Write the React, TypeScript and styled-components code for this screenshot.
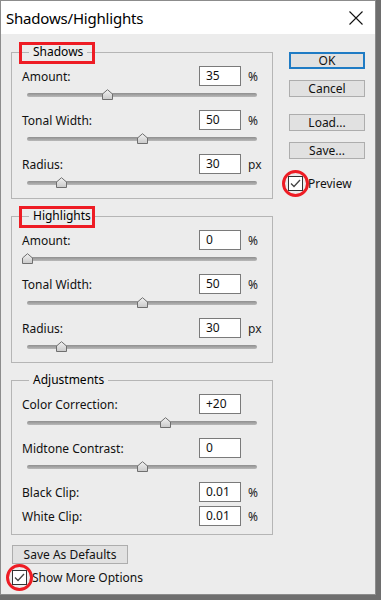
import React from "react";
import styled, { createGlobalStyle } from "styled-components";

const Global = createGlobalStyle`
  html, body { margin: 0; padding: 0; background: #6e6e6e; }
  body { font-family: "Noto Sans", "Open Sans", sans-serif; color: #000; }
  * { box-sizing: border-box; }
`;

const Window = styled.div`
  width: 376px;
  height: 595px;
  border: 1px solid #8c8c8c;
  background: #ececec;
  display: flex;
  flex-direction: column;
`;

const TitleBar = styled.div`
  height: 33px;
  background: #ffffff;
  display: flex;
  align-items: center;
  justify-content: space-between;
  padding: 0 12px 0 5px;
`;

const Title = styled.div`
  font-size: 15px;
  letter-spacing: -0.2px;
  color: #000;
`;

const Body = styled.div`
  display: flex;
  padding: 10px 0 0 10px;
  gap: 16px;
`;

const LeftColumn = styled.div`
  width: 262px;
  display: flex;
  flex-direction: column;
  gap: 9px;
`;

const RightColumn = styled.div`
  width: 76px;
  padding-top: 8px;
  display: flex;
  flex-direction: column;
`;

const Group = styled.fieldset`
  margin: 0;
  padding: 0;
  border: 1px solid #b5b5b5;
  min-width: 0;
`;

const Legend = styled.legend`
  position: relative;
  margin-left: 17px;
  padding: 0 4px;
  font-size: 12px;
  line-height: 16px;
  height: 16px;
`;

const RedBox = styled.span`
  position: absolute;
  left: -10px;
  top: -2px;
  width: 76px;
  height: 22px;
  border: 3px solid #ee1c24;
`;

const GroupContent = styled.div<{ $bottom?: number }>`
  padding: 6px 0 ${(p) => p.$bottom ?? 0}px 10px;
  display: flex;
  flex-direction: column;
`;

const Row = styled.div<{ $gap?: number }>`
  display: flex;
  align-items: center;
  height: 20px;
  margin-top: ${(p) => p.$gap ?? 0}px;
`;

const Label = styled.div`
  flex: 1;
  font-size: 12px;
  color: #111;
`;

const NumberBox = styled.div`
  width: 42px;
  height: 20px;
  background: #fff;
  border: 1px solid #7a7a7a;
  font-size: 12px;
  line-height: 18px;
  padding-left: 6px;
  color: #111;
`;

const Unit = styled.div`
  width: 31px;
  padding-left: 7px;
  font-size: 12px;
  color: #222;
`;

const SliderBlock = styled.div`
  position: relative;
  height: 24px;
  width: 230px;
  margin-left: 5px;
`;

const Track = styled.div`
  position: absolute;
  left: 0;
  right: 0;
  top: 7px;
  height: 4px;
  border-radius: 2px;
  background: linear-gradient(#8f8f8f, #b9b9b9);
`;

const ThumbSvg = styled.svg`
  position: absolute;
  top: 3px;
`;

const Button = styled.div<{ $default?: boolean; $mt?: number }>`
  height: 17px;
  margin-top: ${(p) => p.$mt ?? 0}px;
  background: #e1e1e1;
  border: ${(p) => (p.$default ? "2px solid #1f7bc4" : "1px solid #adadad")};
  font-size: 12px;
  line-height: ${(p) => (p.$default ? "13px" : "15px")};
  text-align: center;
  color: #111;
`;

const CheckRow = styled.div<{ $mt?: number; $ml?: number }>`
  display: flex;
  align-items: center;
  margin-top: ${(p) => p.$mt ?? 0}px;
  margin-left: ${(p) => p.$ml ?? 0}px;
  font-size: 12px;
  color: #111;
  gap: 5px;
`;

const CheckBox = styled.div`
  position: relative;
  width: 15px;
  height: 15px;
  border: 1px solid #333;
  background: #fff;
  display: flex;
  align-items: center;
  justify-content: center;
`;

const RedRing = styled.span`
  position: absolute;
  left: 50%;
  top: 50%;
  width: 27px;
  height: 27px;
  margin: -13.5px 0 0 -13.5px;
  border: 3px solid #ee1c24;
  border-radius: 50%;
`;

const DefaultsButton = styled(Button)`
  width: 116px;
  height: 19px;
  line-height: 17px;
  margin-left: 1px;
`;

const Thumb = ({ pos }: { pos: number }) => (
  <ThumbSvg width="11" height="11" viewBox="0 0 11 11" style={{ left: `${pos * 230 - 5.5}px` }}>
    <defs>
      <linearGradient id="tg" x1="0" y1="0" x2="0" y2="1">
        <stop offset="0" stopColor="#f2f2f2" />
        <stop offset="1" stopColor="#c9c9c9" />
      </linearGradient>
    </defs>
    <path d="M0.5 5 L5.5 0.7 L10.5 5 L10.5 10.5 L0.5 10.5 Z" fill="url(#tg)" stroke="#6f6f6f" strokeWidth="1" />
  </ThumbSvg>
);

const Slider = ({ pos }: { pos: number }) => (
  <SliderBlock>
    <Track />
    <Thumb pos={pos} />
  </SliderBlock>
);

const Check = ({ ring }: { ring?: boolean }) => (
  <CheckBox>
    <svg width="11" height="9" viewBox="0 0 11 9">
      <path d="M1 4.5 L4 7.5 L10 1" fill="none" stroke="#444" strokeWidth="1.3" />
    </svg>
    {ring && <RedRing />}
  </CheckBox>
);

type Field = { label: string; value: string; unit?: string; pos: number };

const shadows: Field[] = [
  { label: "Amount:", value: "35", unit: "%", pos: 0.35 },
  { label: "Tonal Width:", value: "50", unit: "%", pos: 0.5 },
  { label: "Radius:", value: "30", unit: "px", pos: 0.148 },
];

const highlights: Field[] = [
  { label: "Amount:", value: "0", unit: "%", pos: 0 },
  { label: "Tonal Width:", value: "50", unit: "%", pos: 0.5 },
  { label: "Radius:", value: "30", unit: "px", pos: 0.148 },
];

const SliderFields = ({ fields }: { fields: Field[] }) => (
  <>
    {fields.map((f) => (
      <React.Fragment key={f.label}>
        <Row>
          <Label>{f.label}</Label>
          <NumberBox>{f.value}</NumberBox>
          <Unit>{f.unit ?? ""}</Unit>
        </Row>
        <Slider pos={f.pos} />
      </React.Fragment>
    ))}
  </>
);

export default function App() {
  return (
    <>
      <Global />
      <Window>
        <TitleBar>
          <Title>Shadows/Highlights</Title>
          <svg width="14" height="14" viewBox="0 0 14 14">
            <path d="M0.5 0.5 L13.5 13.5 M13.5 0.5 L0.5 13.5" stroke="#111" strokeWidth="1.1" />
          </svg>
        </TitleBar>
        <Body>
          <LeftColumn>
            <Group>
              <Legend>
                Shadows
                <RedBox />
              </Legend>
              <GroupContent>
                <SliderFields fields={shadows} />
              </GroupContent>
            </Group>
            <Group>
              <Legend>
                Highlights
                <RedBox />
              </Legend>
              <GroupContent>
                <SliderFields fields={highlights} />
              </GroupContent>
            </Group>
            <Group>
              <Legend>Adjustments</Legend>
              <GroupContent $bottom={8}>
                <Row>
                  <Label>Color Correction:</Label>
                  <NumberBox>+20</NumberBox>
                  <Unit />
                </Row>
                <Slider pos={0.6} />
                <Row>
                  <Label>Midtone Contrast:</Label>
                  <NumberBox>0</NumberBox>
                  <Unit />
                </Row>
                <Slider pos={0.5} />
                <Row>
                  <Label>Black Clip:</Label>
                  <NumberBox>0.01</NumberBox>
                  <Unit>%</Unit>
                </Row>
                <Row $gap={4}>
                  <Label>White Clip:</Label>
                  <NumberBox>0.01</NumberBox>
                  <Unit>%</Unit>
                </Row>
              </GroupContent>
            </Group>
            <DefaultsButton $mt={1}>Save As Defaults</DefaultsButton>
            <CheckRow $mt={-4} $ml={1}>
              <Check ring />
              <span>Show More Options</span>
            </CheckRow>
          </LeftColumn>
          <RightColumn>
            <Button $default>OK</Button>
            <Button $mt={11}>Cancel</Button>
            <Button $mt={17}>Load...</Button>
            <Button $mt={11}>Save...</Button>
            <CheckRow $mt={16} $ml={-1}>
              <Check ring />
              <span>Preview</span>
            </CheckRow>
          </RightColumn>
        </Body>
      </Window>
    </>
  );
}
